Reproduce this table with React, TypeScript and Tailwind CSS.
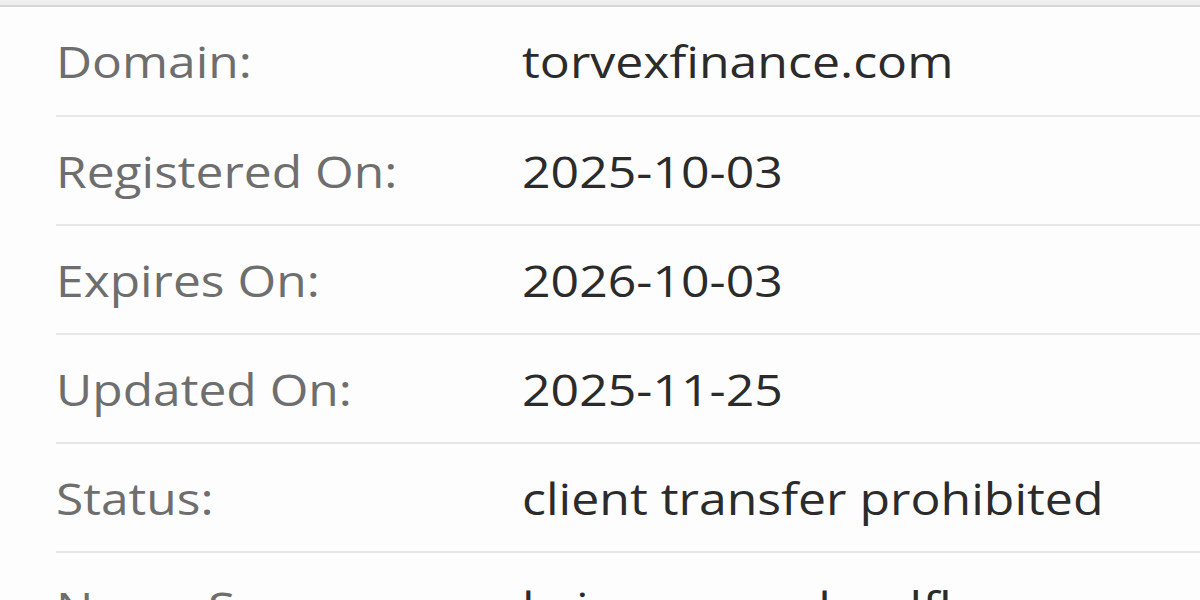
const rows = [
  { label: "Domain:", value: "torvexfinance.com" },
  { label: "Registered On:", value: "2025-10-03" },
  { label: "Expires On:", value: "2026-10-03" },
  { label: "Updated On:", value: "2025-11-25" },
  { label: "Status:", value: "client transfer prohibited" },
  { label: "Name Servers:", value: "kaiwana.ns.cloudflare.com" },
];

export default function App() {
  return (
    <main className="h-[600px] overflow-hidden bg-[#fdfdfd] font-['Open_Sans',sans-serif]">
      <div className="h-[5px] bg-[#eeeeee]" />
      <div className="h-[2px] bg-[#d6d6d6]" />
      <dl className="ml-[56px]">
        {rows.map((row, i) => (
          <div
            key={row.label}
            className={
              i === 0
                ? "flex h-[110px] items-center border-b-2 border-[#e7e7e7] text-[44px]"
                : "flex h-[109px] items-center border-b-2 border-[#e7e7e7] text-[44px]"
            }
          >
            <dt className="w-[466px] shrink-0 text-[#6e6e6e]">
              <span className="inline-block origin-left scale-x-[1.13]">{row.label}</span>
            </dt>
            <dd className="whitespace-nowrap text-[#2b2b2b]">
              <span className="inline-block origin-left scale-x-[1.136]">{row.value}</span>
            </dd>
          </div>
        ))}
      </dl>
    </main>
  );
}
